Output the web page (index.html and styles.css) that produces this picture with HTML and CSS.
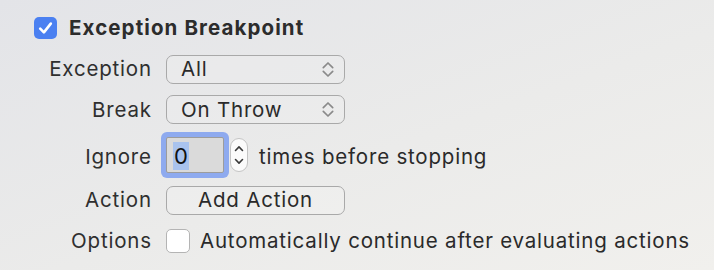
FILE: index.html
```html
<!DOCTYPE html>
<html>
<head>
<meta charset="utf-8">
<link rel="stylesheet" href="styles.css">
</head>
<body>
<div class="panel">
  <div class="title-row">
    <span class="check check-on">
      <svg width="23" height="22" viewBox="0 0 23 22"><path d="M6.2 11.6 L9.9 15.4 L16.8 6.6" fill="none" stroke="#fff" stroke-width="2.6" stroke-linecap="round" stroke-linejoin="round"/></svg>
    </span>
    <span class="title">Exception Breakpoint</span>
  </div>
  <div class="form">
    <div class="label">Exception</div>
    <div class="popup"><span>All</span>
      <svg class="chev" width="12" height="17" viewBox="0 0 12 17"><path d="M1.3 6.6 L6 2 L10.7 6.6 M1.3 10.4 L6 15 L10.7 10.4" fill="none" stroke="#8a8a8a" stroke-width="1.7" stroke-linecap="round" stroke-linejoin="round"/></svg>
    </div>

    <div class="label">Break</div>
    <div class="popup"><span>On Throw</span>
      <svg class="chev" width="12" height="17" viewBox="0 0 12 17"><path d="M1.3 6.6 L6 2 L10.7 6.6 M1.3 10.4 L6 15 L10.7 10.4" fill="none" stroke="#8a8a8a" stroke-width="1.7" stroke-linecap="round" stroke-linejoin="round"/></svg>
    </div>

    <div class="label label-ignore">Ignore</div>
    <div class="ignore-row">
      <div class="field"><span class="sel">0</span></div>
      <div class="stepper">
        <svg width="17" height="34" viewBox="0 0 17 34"><path d="M4.8 12.2 L8.5 8.4 L12.2 12.2 M4.8 21.8 L8.5 25.6 L12.2 21.8" fill="none" stroke="#3a3a3a" stroke-width="1.7" stroke-linecap="round" stroke-linejoin="round"/></svg>
      </div>
      <span class="text">times before stopping</span>
    </div>

    <div class="label">Action</div>
    <div class="button">Add Action</div>

    <div class="label">Options</div>
    <div class="option-row">
      <span class="check check-off"></span>
      <span class="text">Automatically continue after evaluating actions</span>
    </div>
  </div>
</div>
</body>
</html>
```

FILE: styles.css
```css
html, body {
  margin: 0;
  padding: 0;
}
body {
  width: 714px;
  height: 270px;
  overflow: hidden;
  background: linear-gradient(160deg, #e3e4e8 0%, #ebebea 55%, #f1f0ed 100%);
  font-family: Inter, "Liberation Sans", sans-serif;
  color: #2a2a2a;
}
.panel {
  padding-top: 17px;
}
.title-row {
  display: flex;
  align-items: center;
  height: 22px;
  padding-left: 34px;
  gap: 12px;
}
.check {
  display: inline-block;
  box-sizing: border-box;
  width: 23px;
  height: 23px;
  border-radius: 5px;
  flex: none;
}
.check-on {
  background: #4b80f1;
  height: 22px;
}
.check-on svg {
  display: block;
}
.check-off {
  background: #ffffff;
  border: 1px solid #b4b4b4;
  width: 24px;
  height: 24px;
}
.title {
  font-weight: 700;
  font-size: 20.5px;
  letter-spacing: 1.1px;
  line-height: 22px;
  color: #2c2c2c;
}
.form {
  margin-top: 10px;
  display: grid;
  grid-template-columns: 151px auto;
  grid-template-rows: 40px 41px 49px 42px 39px;
  column-gap: 15px;
  align-items: center;
  font-size: 20.5px;
  letter-spacing: 0.8px;
}
.label {
  text-align: right;
  line-height: 22px;
  color: #2f2f2f;
  margin-right: -0.8px;
}
.label-ignore {
  padding-top: 5px;
}
.popup, .button {
  box-sizing: border-box;
  width: 179px;
  height: 29px;
  border: 1.5px solid #a9a9a9;
  border-radius: 7px;
  display: flex;
  align-items: center;
  line-height: 22px;
}
.popup {
  padding-left: 14px;
  padding-right: 10px;
  justify-content: space-between;
  background: rgba(255, 255, 255, 0.12);
}
.popup .chev {
  display: block;
}
.button {
  justify-content: center;
  background: rgba(255, 255, 255, 0.18);
}
.ignore-row {
  display: flex;
  align-items: center;
}
.field {
  box-sizing: border-box;
  width: 58px;
  height: 36px;
  background: #dadada;
  border: 1px solid #9c9c9c;
  border-radius: 2px;
  box-shadow: 0 0 0 5px #8eaaef;
  padding-left: 6px;
  display: flex;
  align-items: center;
}
.sel {
  background: #a9c3ee;
  line-height: 28px;
  padding: 0 1px 0 1px;
  margin-top: 2px;
  color: #111;
  letter-spacing: 0;
  font-size: 22px;
}
.stepper {
  box-sizing: border-box;
  width: 18px;
  height: 34px;
  margin-left: 6px;
  border: 1px solid #c4c4c4;
  border-radius: 9px;
  background: #fbfbfb;
  display: flex;
  align-items: center;
  justify-content: center;
}
.stepper svg {
  display: block;
}
.ignore-row .text {
  margin-left: 11px;
  line-height: 22px;
  padding-top: 5px;
}
.option-row {
  display: flex;
  align-items: center;
  gap: 10px;
}
.option-row .text {
  line-height: 22px;
}
```
